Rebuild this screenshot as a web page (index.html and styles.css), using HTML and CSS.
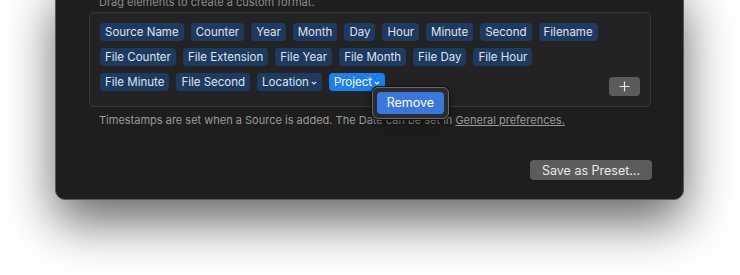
FILE: index.html
```html
<!DOCTYPE html>
<html lang="en">
<head>
    <meta charset="UTF-8">
    <meta name="viewport" content="width=device-width, initial-scale=1.0">
    <title>Custom Format</title>
    <link rel="stylesheet" href="styles.css">
</head>
<body>
    <div class="window">
        <p class="hint">Drag elements to create a custom format.</p>
        <div class="format-box">
            <div class="tokens">
                <span class="token">Source Name</span>
                <span class="token">Counter</span>
                <span class="token">Year</span>
                <span class="token">Month</span>
                <span class="token">Day</span>
                <span class="token">Hour</span>
                <span class="token">Minute</span>
                <span class="token">Second</span>
                <span class="token">Filename</span>
                <span class="token">File Counter</span>
                <span class="token">File Extension</span>
                <span class="token">File Year</span>
                <span class="token">File Month</span>
                <span class="token">File Day</span>
                <span class="token">File Hour</span>
                <span class="token">File Minute</span>
                <span class="token">File Second</span>
                <span class="token">Location<svg class="chev" viewBox="0 0 6 4"><path d="M0.8 0.8 L3 3 L5.2 0.8"/></svg></span>
                <span class="token selected">Project<svg class="chev" viewBox="0 0 6 4"><path d="M0.8 0.8 L3 3 L5.2 0.8"/></svg>
                    <div class="popup">
                        <div class="popup-item">Remove</div>
                    </div>
                </span>
            </div>
            <button class="add-btn" type="button">
                <svg viewBox="0 0 12 12"><path d="M6 0.5 V11.5 M0.5 6 H11.5"/></svg>
            </button>
        </div>
        <p class="note">Timestamps are set when a Source is added. The Date can be set in <a href="#">General preferences.</a></p>
        <div class="actions">
            <button class="preset-btn" type="button">Save as Preset...</button>
        </div>
    </div>
</body>
</html>
```

FILE: styles.css
```css
html, body {
    height: 100%;
}
body {
    margin: 0;
    display: flow-root;
    background: #fff;
    font-family: Inter, "Liberation Sans", Arial, sans-serif;
    overflow: hidden;
}
.window {
    box-sizing: border-box;
    width: 629px;
    height: 221px;
    margin: -21px 0 0 55px;
    padding: 0 32px 0 33px;
    background-color: #1e1e1e;
    border: 1px solid #585858;
    border-radius: 10px;
    box-shadow: 0 22px 50px rgba(0, 0, 0, 0.6);
}
.hint {
    margin: 15px 0 0 10px;
    font-size: 11px;
    line-height: 14px;
    color: #8c8c8c;
}
.format-box {
    display: flex;
    align-items: flex-end;
    margin-top: 3px;
    padding: 10px;
    background-color: #232323;
    border: 1px solid #383838;
    border-radius: 5px;
}
.tokens {
    flex: 1;
    display: flex;
    flex-wrap: wrap;
    gap: 7px;
    padding-bottom: 5px;
    padding-right: 8px;
}
.token {
    position: relative;
    display: flex;
    align-items: center;
    height: 18px;
    padding: 0 5px;
    font-size: 11.5px;
    color: #dfe5ee;
    background-color: #1d3a60;
    border-radius: 4px;
}
.token.selected {
    background-color: #1a7ef5;
    color: #fff;
}
.chev {
    width: 6px;
    height: 4px;
    margin-left: 2px;
    margin-top: 2px;
    fill: none;
    stroke: currentColor;
    stroke-width: 1.2;
}
.popup {
    position: absolute;
    left: 43px;
    top: 14px;
    z-index: 2;
    width: 77px;
    box-sizing: border-box;
    padding: 4px;
    background-color: #2b2b2b;
    border: 1px solid #6a6a6a;
    border-radius: 6px;
    box-shadow: 0 0 0 1px #111, 0 4px 10px rgba(0, 0, 0, 0.5);
}
.popup-item {
    height: 22px;
    line-height: 22px;
    text-align: center;
    font-size: 12.5px;
    color: #fff;
    background-color: #3a78e0;
    border-radius: 4px;
}
.add-btn {
    width: 31px;
    height: 19px;
    padding: 0;
    display: flex;
    align-items: center;
    justify-content: center;
    background-color: #5b5b5b;
    border: none;
    border-radius: 4px;
}
.add-btn svg {
    width: 11px;
    height: 11px;
    stroke: #e6e6e6;
    stroke-width: 1.3;
}
.note {
    margin: 6px 0 0 10px;
    font-size: 11px;
    line-height: 14px;
    color: #9a9a9a;
}
.note a {
    color: #9a9a9a;
    text-decoration: underline;
}
.actions {
    display: flex;
    justify-content: flex-end;
    margin-top: 33px;
}
.preset-btn {
    height: 20px;
    width: 122px;
    padding: 0;
    margin-right: -1px;
    font-family: inherit;
    font-size: 12.5px;
    color: #e8e8e8;
    background-color: #5c5c5c;
    border: none;
    border-radius: 4px;
}
```
